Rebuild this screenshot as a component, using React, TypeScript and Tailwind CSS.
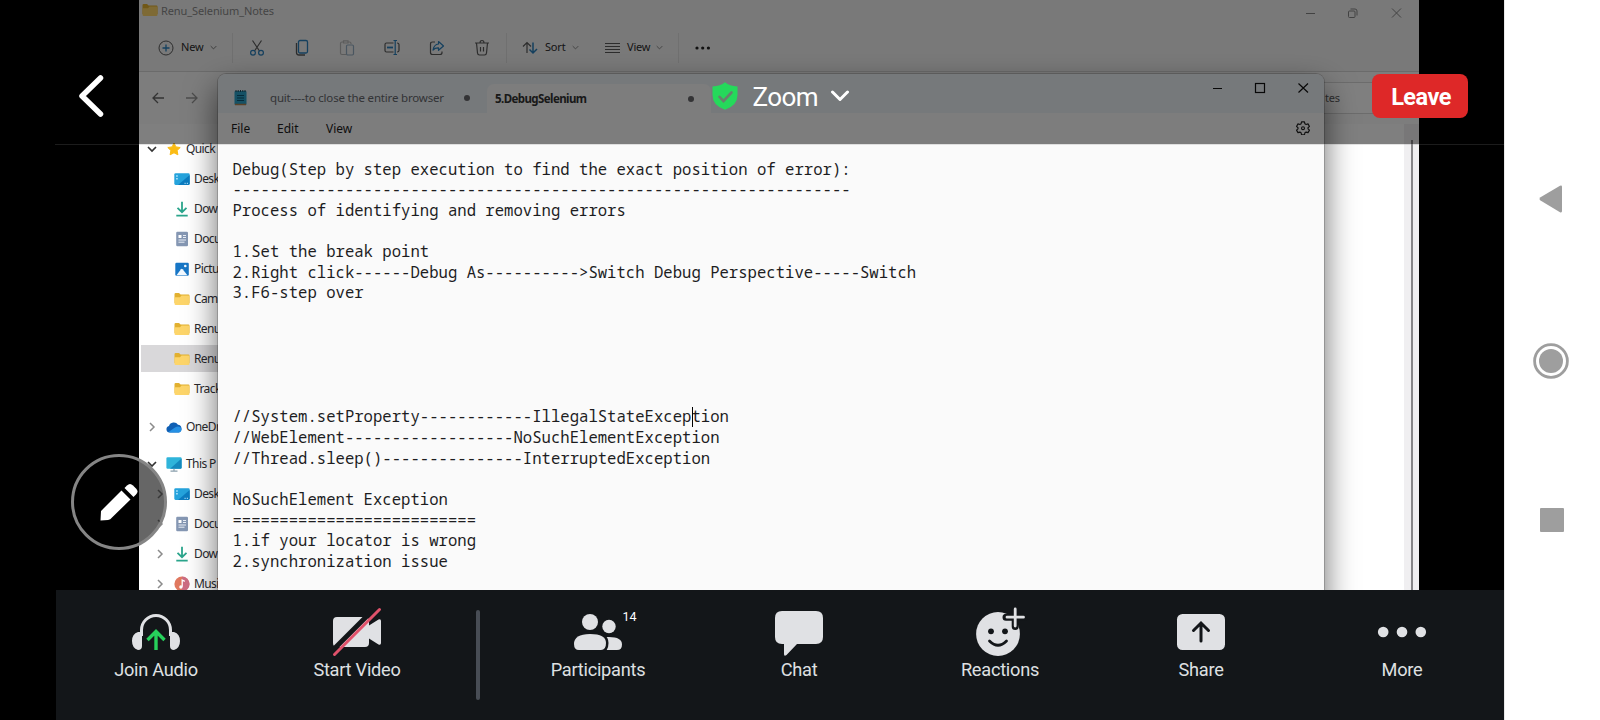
import React from "react";

type Kind = "star" | "desktop" | "download" | "document" | "picture" | "folder" | "cloud" | "pc" | "music";

function FolderIcon() {
  return (
    <svg width="16" height="14" viewBox="0 0 16 14" className="block shrink-0">
      <path d="M0.5 2.2Q0.5 1 1.7 1H5l1.6 1.6H14.4Q15.5 2.6 15.5 3.8V11H0.5Z" fill="#e2b02f" />
      <path d="M0.5 5.2H6l1.5-1.7h6.8q1.2 0 1.2 1.2v7q0 1.3-1.2 1.3H1.7Q0.5 13 0.5 11.7Z" fill="#fdd56a" />
    </svg>
  );
}

function SideIcon({ kind }: { kind: Kind }) {
  if (kind === "folder") return <FolderIcon />;
  return (
    <svg width="16" height="16" viewBox="0 0 16 16" className="block shrink-0">
      {kind === "star" && (
        <path
          d="M8 2l1.900 3.900 4.300.6-3.100 3 .8 4.300L8 11.800l-3.900 2 .8-4.300-3.100-3 4.300-.6Z"
          fill="#fbbc14"
          stroke="#fbbc14"
          strokeLinejoin="round"
        />
      )}
      {kind === "desktop" && (
        <>
          <rect x="0.3" y="2.3" width="15.4" height="11.6" rx="1.3" fill="#25a3dc" />
          <path d="M15.7 4v8.6q0 1.3-1.3 1.3H4Z" fill="#0c7cc0" />
          <path d="M2.2 4.3h1.5v1.4H2.2zM2.2 7h1.5v1.4H2.2z" fill="#bfeaff" />
          <path d="M10.5 12.3h1.2M12.8 12.3H14" stroke="#bfeaff" />
        </>
      )}
      {kind === "download" && (
        <path d="M8 .7v10M3.5 6.8 8 11.2l4.500-4.400M2.300 14.600h11.400" fill="none" stroke="#2ba58c" strokeWidth="1.8" />
      )}
      {kind === "document" && (
        <>
          <rect x="2.2" y="0.8" width="11.8" height="14.4" rx="1.2" fill="#8597b3" />
          <path d="M4.500 4h3v3h-3z" fill="#fff" />
          <path d="M9 4.500h3M9 6.500h3M4.500 9h7.500M4.500 11.200h6" stroke="#e9eef6" />
        </>
      )}
      {kind === "picture" && (
        <>
          <rect x="1.300" y="1.700" width="13.500" height="13" rx="1.200" fill="#1776c6" />
          <path d="M2.500 14.200 7 8.300q.8-.9 1.600 0l4.800 5.900Z" fill="#f2f9ff" />
          <circle cx="11.300" cy="5" r="1.300" fill="#f2f9ff" />
        </>
      )}
      {kind === "cloud" && (
        <>
          <path d="M3.500 13.500A3.300 3.300 0 0 1 3 7a5 5 0 0 1 9-1.200 4 4 0 0 1 1 7.700Z" fill="#0f5fb4" />
          <path d="M2.500 13 9 8.500q3-2 5.500-.3A3.100 3.100 0 0 1 12.800 13.500H4Z" fill="#2590e4" />
        </>
      )}
      {kind === "pc" && (
        <>
          <rect x="0.400" y="1.200" width="15.200" height="11.600" rx="1.200" fill="#2fb4da" />
          <path d="M15.600 2.500v9q0 1.300-1.300 1.300H4Z" fill="#1589bd" />
          <path d="M8 12.800v2M4.500 15.200h7" stroke="#8aa0ad" strokeWidth="1.200" />
        </>
      )}
      {kind === "music" && (
        <>
          <circle cx="8" cy="8" r="7.600" fill="#e0785f" />
          <path d="M8 .4a7.600 7.600 0 0 1 0 15.200Z" fill="#c0659a" opacity=".6" />
          <path d="M8.200 10.800V4l2.600 1.400" fill="none" stroke="#fff" strokeWidth="1.300" />
          <circle cx="6.900" cy="11" r="1.700" fill="#fff" />
        </>
      )}
    </svg>
  );
}

function Chevron({ dir, color = "#333", size = 10, w = 1.4 }: { dir: "down" | "right"; color?: string; size?: number; w?: number }) {
  return (
    <svg width={size} height={size} viewBox="0 0 10 10" className="block shrink-0" fill="none" stroke={color} strokeWidth={w}>
      <path d={dir === "down" ? "M1 3l4 4 4-4" : "M3 1l4 4-4 4"} />
    </svg>
  );
}

function SideRow({ label, kind, arrow, nested, selected }: { label: string; kind: Kind; arrow?: "down" | "right"; nested?: boolean; selected?: boolean }) {
  return (
    <div className={`flex h-[30.05px] items-center ${nested ? "pl-[16px]" : "pl-[8px]"}`}>
      <div className={`flex h-[27px] items-center ${selected ? "-ml-[14px] w-[120px] bg-[#d9d8da] pl-[14px]" : ""}`}>
        <div className={`flex w-[10px] ${nested ? "mr-[9px]" : "mr-[9px]"}`}>
          {arrow && <Chevron dir={arrow} color={arrow === "down" ? "#333" : "#8b8b8b"} w={arrow === "down" ? 1.7 : 1.5} />}
        </div>
        <SideIcon kind={kind} />
        <span className="ml-[4px] whitespace-nowrap text-[12px] leading-none tracking-[-0.6px] text-[#2a2a2e]">{label}</span>
      </div>
    </div>
  );
}

function Explorer() {
  const g = "#5a5a5a";
  const b = "#2a80bd";
  return (
    <div className="flex h-[590px] w-[1280px] flex-col bg-white font-['Noto_Sans','Open_Sans',sans-serif]">
      <div className="flex h-[24px] shrink-0 items-center justify-between bg-[#f3f3f3] pl-[3px] pr-[17px]">
        <div className="flex items-center gap-[3px] pb-[4px]">
          <FolderIcon />
          <span className="text-[11px] leading-none tracking-[-0.100px] text-[#8a8a8a]">Renu_Selenium_Notes</span>
        </div>
        <svg width="98" height="12" viewBox="0 0 98 12" fill="none" stroke="#858585" className="mt-[2px]">
          <path d="M2 6.500h9M88 1.500l9 9M97 1.500l-9 9" />
          <rect x="44.500" y="4" width="6.500" height="6.500" rx="1" />
          <path d="M46.500 2h4.500q2 0 2 2v4.500" />
        </svg>
      </div>
      <div className="flex h-[48px] shrink-0 items-center border-b border-[#d6d6d6] bg-[#f3f3f3] pl-[19px] text-[11px] tracking-[-0.2px] text-[#2c2c2c]">
        <svg width="16" height="16" viewBox="0 0 16 16" fill="none" stroke={g}>
          <circle cx="8" cy="8" r="7" />
          <path d="M8 4.500v7M4.500 8h7" stroke={b} strokeWidth="1.300" />
        </svg>
        <span className="ml-[7px] w-[25px]">New</span>
        <span className="ml-[4px]"><Chevron dir="down" size={7} color="#777" /></span>
        <span className="ml-[15px] h-[30px] w-px bg-[#e0e0e0]" />
        <div className="ml-[16px] flex items-center gap-[29px]">
          <svg width="16" height="18" viewBox="0 0 16 18" fill="none" stroke={g} strokeWidth="1.200">
            <path d="M3.500 1.500 10.500 12M12.500 1.500 5.500 12" />
            <circle cx="4" cy="13.800" r="2.400" stroke={b} />
            <circle cx="12" cy="13.800" r="2.400" stroke={b} />
          </svg>
          <svg width="16" height="18" viewBox="0 0 16 18" fill="none" stroke={b} strokeWidth="1.300">
            <rect x="4.500" y="1.500" width="9" height="12.500" rx="1.500" />
            <path d="M2.500 4v9.500q0 2.500 2.500 2.500h6" stroke={g} />
          </svg>
          <svg width="16" height="18" viewBox="0 0 16 18" fill="none" stroke="#b9b9b9" strokeWidth="1.200">
            <path d="M7 15.500H3q-1.500 0-1.500-1.500V4.500Q1.500 3 3 3h1.500M9 3h1.500Q12 3 12 4.500V5M4.500 1.800H9V4H4.500Z" />
            <rect x="7.500" y="6" width="7" height="10" rx="1.200" stroke="#95adc2" />
          </svg>
          <svg width="16" height="18" viewBox="0 0 16 18" fill="none" stroke={g} strokeWidth="1.200">
            <path d="M9.500 4H2.500Q1 4 1 5.500v6Q1 13 2.500 13h7M13 4q2 0 2 1.500v6q0 1.500-2 1.500" />
            <path d="M3 8.500h6" stroke={b} strokeWidth="1.800" />
            <path d="M11.200 1.500v14M9.500 1.500h3.500M9.500 15.500h3.500" stroke={b} />
          </svg>
          <svg width="16" height="18" viewBox="0 0 16 18" fill="none" stroke={g} strokeWidth="1.200">
            <path d="M6 3H3.500Q1.500 3 1.500 5v8.500q0 2 2 2H11q2 0 2-2V12.500" />
            <path d="M9.500 2.500 14.500 7l-5 4.300V8.800Q6 8.600 4 11 5 5.500 9.500 5Z" stroke={b} strokeLinejoin="round" />
          </svg>
          <svg width="16" height="18" viewBox="0 0 16 18" fill="none" stroke={g} strokeWidth="1.200">
            <path d="M1 4h14M6 4q0-2.500 2-2.500T10 4M2.500 4l1 10q.2 2 2 2h5q1.800 0 2-2l1-10M6.500 8v4.500M9.500 8v4.500" />
          </svg>
        </div>
        <span className="ml-[16px] h-[30px] w-px bg-[#e0e0e0]" />
        <svg width="16" height="16" viewBox="0 0 16 16" fill="none" stroke={g} strokeWidth="1.200" className="ml-[15px]">
          <path d="M5 13V2.500M1 6.500l4-4 4 4" />
          <path d="M11 2.500V13M7.500 9.500 11 13l4-4" stroke={b} strokeWidth="1.500" />
        </svg>
        <span className="ml-[7px] w-[22px]">Sort</span>
        <span className="ml-[5px]"><Chevron dir="down" size={7} color="#888" /></span>
        <svg width="16" height="14" viewBox="0 0 16 14" stroke={g} className="ml-[26px]">
          <path d="M0 2.500h15M0 5.500h15M0 8.500h15M0 11.500h15" />
        </svg>
        <span className="ml-[6px] w-[26px]">View</span>
        <span className="ml-[3px]"><Chevron dir="down" size={7} color="#888" /></span>
        <span className="ml-[15px] h-[30px] w-px bg-[#e0e0e0]" />
        <svg width="16" height="6" viewBox="0 0 16 6" fill="#222" className="ml-[16px]">
          <circle cx="2" cy="3" r="1.600" />
          <circle cx="7.700" cy="3" r="1.600" />
          <circle cx="13.400" cy="3" r="1.600" />
        </svg>
      </div>
      <div className="flex h-[52px] shrink-0 items-center justify-between bg-[#fafafa] pl-[13px]">
        <svg width="46" height="12" viewBox="0 0 46 12" fill="none" stroke="#666" strokeWidth="1.300">
          <path d="M12 6H1M6 1 1 6l5 5" />
          <path d="M34 6h11M40 1l5 5-5 5" stroke="#999" />
        </svg>
        <div className="flex h-[32px] w-[220px] items-center border border-[#d8d8d8] bg-white pl-[125px] text-[11px] tracking-[-0.200px] text-[#5e5e5e]">tes</div>
      </div>
      <div className="flex min-h-0 grow justify-between overflow-hidden">
        <div className="w-[79px] overflow-hidden pt-[9.600px]">
          <SideRow label="Quick" kind="star" arrow="down" />
          <SideRow label="Desk" kind="desktop" nested />
          <SideRow label="Dow" kind="download" nested />
          <SideRow label="Docu" kind="document" nested />
          <SideRow label="Pictu" kind="picture" nested />
          <SideRow label="Cam" kind="folder" nested />
          <SideRow label="Renu" kind="folder" nested />
          <SideRow label="Renu" kind="folder" nested selected />
          <SideRow label="Track" kind="folder" nested />
          <div className="h-[7.500px]" />
          <SideRow label="OneDr" kind="cloud" arrow="right" />
          <div className="h-[7.500px]" />
          <SideRow label="This P" kind="pc" arrow="down" />
          <SideRow label="Desk" kind="desktop" arrow="right" nested />
          <SideRow label="Docu" kind="document" arrow="right" nested />
          <SideRow label="Dow" kind="download" arrow="right" nested />
          <SideRow label="Musi" kind="music" arrow="right" nested />
        </div>
        <div className="flex w-[15px] justify-center bg-[#f0eff1] pt-[16px]">
          <div className="w-[2px] bg-[#868588]" />
        </div>
      </div>
    </div>
  );
}

const NOTE = `Debug(Step by step execution to find the exact position of error):
------------------------------------------------------------------
Process of identifying and removing errors

1.Set the break point
2.Right click------Debug As---------->Switch Debug Perspective-----Switch
3.F6-step over





//System.setProperty------------IllegalStateException
//WebElement------------------NoSuchElementException
//Thread.sleep()---------------InterruptedException

NoSuchElement Exception
==========================
1.if your locator is wrong
2.synchronization issue`;

function Notepad() {
  return (
    <div className="absolute left-[79px] top-[74px] flex h-[560px] w-[1106px] flex-col overflow-hidden rounded-t-[8px] bg-[#fafafa] font-['Noto_Sans','Open_Sans',sans-serif] shadow-[0_14px_32px_rgba(0,0,0,0.6),0_0_0_1px_rgba(0,0,0,0.18)]">
      <div className="flex h-[39px] shrink-0 bg-[#edf2f7]">
        <div className="flex w-[269px] items-center pl-[16px] pt-[8px]">
          <svg width="13" height="17" viewBox="0 0 13 17">
            <rect x="0.500" y="2" width="12" height="14" rx="1" fill="#2aa3ca" />
            <path d="M1 15.500h11" stroke="#b4824e" strokeWidth="1.500" />
            <path d="M2 1v2M4.200 1v2M6.500 1v2M8.800 1v2M11 1v2" stroke="#1c4a5c" />
            <path d="M3 6.500h7M3 9h7M3 11.500h7" stroke="#0a5674" />
          </svg>
          <span className="ml-[23px] w-[175px] whitespace-nowrap text-[11.500px] tracking-[-0.180px] text-[#65686c]">quit----to close the entire browser</span>
          <span className="ml-[19px] h-[6px] w-[6px] rounded-full bg-[#66666a]" />
        </div>
        <div className="mt-[10px] flex w-[224px] items-center rounded-t-[7px] bg-[#fafafa] pl-[8px]">
          <span className="w-[190px] whitespace-nowrap text-[11.500px] font-bold tracking-[-0.580px] text-[#333]">5.DebugSelenium</span>
          <span className="ml-[3px] h-[6px] w-[6px] rounded-full bg-[#66666a]" />
        </div>
        <svg width="10" height="10" viewBox="0 0 10 10" stroke="#555" className="ml-[16px] mt-[19px] block">
          <path d="M5 .5v9M.5 5h9" />
        </svg>
        <div className="flex grow justify-end pr-[15px] pt-[7.500px]">
          <svg width="98" height="12" viewBox="0 0 98 12" fill="none" stroke="#111" strokeWidth="1.200">
            <path d="M2 6.500h9M87.500 1.500l9.500 9M97 1.500l-9.500 9" />
            <rect x="44.500" y="1.500" width="9" height="9" />
          </svg>
        </div>
      </div>
      <div className="flex h-[31px] shrink-0 items-center gap-[26px] bg-[#fafafa] pl-[13px] pr-[14px] text-[12px] text-[#1c1c1c]">
        <span className="w-[20px]">File</span>
        <span className="w-[23px]">Edit</span>
        <span>View</span>
        <svg width="14" height="14" viewBox="0 0 24 24" fill="none" stroke="#222" strokeWidth="2" strokeLinejoin="round" className="mb-[2px] ml-auto">
          <path d="M9.500 1.500h5l.8 3.300 2 1.200 3.300-1 2.500 4.300-2.500 2.300v1.800l2.500 2.300-2.500 4.300-3.300-1-2 1.200-.8 3.300h-5l-.8-3.300-2-1.200-3.300 1-2.500-4.300 2.500-2.300v-1.800L.9 9.300 3.400 5l3.300 1 2-1.200Z" />
          <circle cx="12" cy="12.300" r="2.500" />
        </svg>
      </div>
      <div className="relative grow pl-[14.500px] pt-[14.500px]">
        <pre className="font-['Noto_Sans_Mono','DejaVu_Sans_Mono',monospace] text-[15.620px] leading-[20.650px] text-[#1d1d1f]">{NOTE}</pre>
        <span className="absolute left-[474px] top-[263px] h-[20px] w-px bg-black" />
      </div>
    </div>
  );
}

function Header() {
  return (
    <div className="absolute inset-x-0 top-0 flex h-[144px] items-start justify-between bg-black/50 pl-[22px] pr-[36px] pt-[74px] font-['Roboto',sans-serif] shadow-[0_1px_0_rgba(128,128,128,0.22)]">
      <svg width="30" height="44" viewBox="0 0 30 44" fill="none" stroke="#fff" strokeWidth="5.500" strokeLinecap="round" strokeLinejoin="round">
        <path d="M23.500 4 5 22l18.500 18" />
      </svg>
      <div className="ml-[82px] flex h-[44px] items-center">
        <svg width="26" height="28" viewBox="0 0 26 28">
          <path d="M13 .3Q17.500 4 25.500 4.600V13Q25.500 23.500 13 27.800 .5 23.500.5 13V4.600Q8.500 4 13 .3Z" fill="#25d95b" />
          <path d="m7.500 14.800 4 4.200 8-8.500" fill="none" stroke="#68806d" strokeWidth="2.600" strokeLinecap="round" />
        </svg>
        <span className="ml-[15px] w-[65px] pt-px text-[26px] leading-none tracking-[-0.600px] text-white">Zoom</span>
        <svg width="20" height="12" viewBox="0 0 20 12" fill="none" stroke="#fff" strokeWidth="3" strokeLinecap="round" strokeLinejoin="round" className="ml-[12px]">
          <path d="m2.500 2 7.500 7.500L17.500 2" />
        </svg>
      </div>
      <button className="h-[44px] w-[96px] rounded-[8px] bg-[#de2828] pl-[2px] pt-[3px] text-[23.500px] font-bold leading-none tracking-[-0.500px] text-white">Leave</button>
    </div>
  );
}

function BarItem({ label, children }: { label: string; children: React.ReactNode }) {
  return (
    <div className="flex w-[201px] flex-col items-center pr-[1px] pt-[18px]">
      <svg width="48" height="48" viewBox="0 0 48 48" fill="#e0e1e4" className="block overflow-visible">
        {children}
      </svg>
      <span className="mt-px text-[18.200px] leading-[26px] tracking-[-0.250px] text-[#dfe0e2]">{label}</span>
    </div>
  );
}

function BottomBar() {
  const bg = "#131619";
  return (
    <div className="ml-px flex h-[130px] w-[1448px] bg-[#131619] font-['Roboto',sans-serif]">
      <BarItem label="Join Audio">
        <path d="M9.500 28V22a14.500 14.500 0 0 1 29 0v6" fill="none" stroke="#e0e1e4" strokeWidth="3" />
        <path d="M10 24v14q0 4-4 4Q0 40 0 33t6-9ZM38 24v14q0 4 4 4 6-2 6-9t-6-9Z" />
        <path d="M24 42V24M15.500 32 24 23.500l8.500 8.500" fill="none" stroke="#27cf5b" strokeWidth="3.400" />
      </BarItem>
      <BarItem label="Start Video">
        <path d="M4 9h28q4 0 4 4v4.500L45.500 11.500Q48 10.500 48 13v22q0 2.500-2.500 1.500L36 30.500V35q0 4-4 4H4q-4 0-4-4V13Q0 9 4 9Z" />
        <path d="M-1 43 43-1" stroke={bg} strokeWidth="5" />
        <path d="M1.500 46.500 46.500 1.500" stroke="#e0526b" strokeWidth="3" strokeLinecap="round" />
      </BarItem>
      <div className="flex w-[40px] justify-center pr-[1px] pt-[20px]">
        <div className="h-[90px] w-[4px] rounded-[2px] bg-[#484d55]" />
      </div>
      <BarItem label="Participants">
        <circle cx="16" cy="14" r="8" />
        <circle cx="35" cy="18.500" r="6.700" />
        <path d="M35 29q13 0 13 7.500Q48 42 43 42H27V29Z" />
        <path d="M16 26q16 0 16 9 0 7-5 7H5q-5 0-5-6 0-10 16-10Z" stroke={bg} strokeWidth="5" paintOrder="stroke" />
        <text x="48.500" y="13" fontSize="12.500" fill="#fff">14</text>
      </BarItem>
      <BarItem label="Chat">
        <path d="M7 3h34q7 0 7 7v19q0 7-7 7H22L11.500 47Q9 49 9 46V36H7q-7 0-7-7V10Q0 3 7 3Z" />
      </BarItem>
      <BarItem label="Reactions">
        <circle cx="22" cy="26" r="21.900" />
        <path d="M39.200 0v18.500M30 9.200h18.500" stroke={bg} strokeWidth="7" strokeLinecap="round" />
        <path d="M39.200 1v17M31 9.200h16.500" stroke="#e0e1e4" strokeWidth="2.800" strokeLinecap="round" />
        <circle cx="15" cy="23.300" r="2.900" fill={bg} />
        <circle cx="29" cy="23.300" r="2.900" fill={bg} />
        <path d="M13.500 33q8.500 8.500 17 0" fill="none" stroke={bg} strokeWidth="2.800" strokeLinecap="round" />
      </BarItem>
      <BarItem label="Share">
        <rect x="0" y="6" width="48" height="36" rx="5.500" />
        <path d="M24 33V15.500M16.500 22.500 24 15l7.500 7.500" fill="none" stroke={bg} strokeWidth="3" strokeLinecap="round" />
      </BarItem>
      <BarItem label="More">
        <circle cx="5.200" cy="24" r="5.300" />
        <circle cx="24" cy="24" r="5.300" />
        <circle cx="42.800" cy="24" r="5.300" />
      </BarItem>
    </div>
  );
}

export default function App() {
  return (
    <div className="flex h-[720px] w-[1600px] overflow-hidden bg-black pl-[55px]">
      <div className="flex w-[1449px] flex-col">
        <div className="relative h-[590px] shrink-0 pl-[84px]">
          <div className="relative h-[590px] w-[1280px] overflow-hidden">
            <Explorer />
            <Notepad />
          </div>
          <Header />
          <div className="absolute left-[16px] top-[454px] flex h-[96px] w-[96px] items-center justify-center rounded-full border-[3px] border-[#858585] bg-black/60">
            <svg width="38" height="38" viewBox="0 0 38 38" fill="#fff">
              <path d="M.5 37.500 1 28 21.500 7.500l9 9L12 34.500Q10.500 36.500 8 37Z" />
              <path d="m24.500 5 2.500-2.500q3-3 6 0l3 3q3 3 0 6L33.500 14Z" />
            </svg>
          </div>
        </div>
        <BottomBar />
      </div>
      <div className="flex w-[96px] flex-col items-center border-l border-[#e8e8e8] bg-white pr-[4px]">
        <svg width="24" height="28" viewBox="0 0 24 28" fill="#9e9e9e" className="mt-[185px]">
          <path d="M1.500 12.200 21 .8q2-.8 2 1.200v24q0 2-2 1.200L1.500 15.500Q-.5 14 1.500 12.200Z" />
        </svg>
        <svg width="36" height="36" viewBox="0 0 36 36" className="mt-[129.500px]">
          <circle cx="18" cy="18" r="16.400" fill="none" stroke="#9e9e9e" strokeWidth="2.800" />
          <circle cx="18" cy="18" r="12" fill="#9e9e9e" />
        </svg>
        <div className="ml-[2px] mt-[129.500px] h-[24px] w-[24px] rounded-[1px] bg-[#9e9e9e]" />
      </div>
    </div>
  );
}
